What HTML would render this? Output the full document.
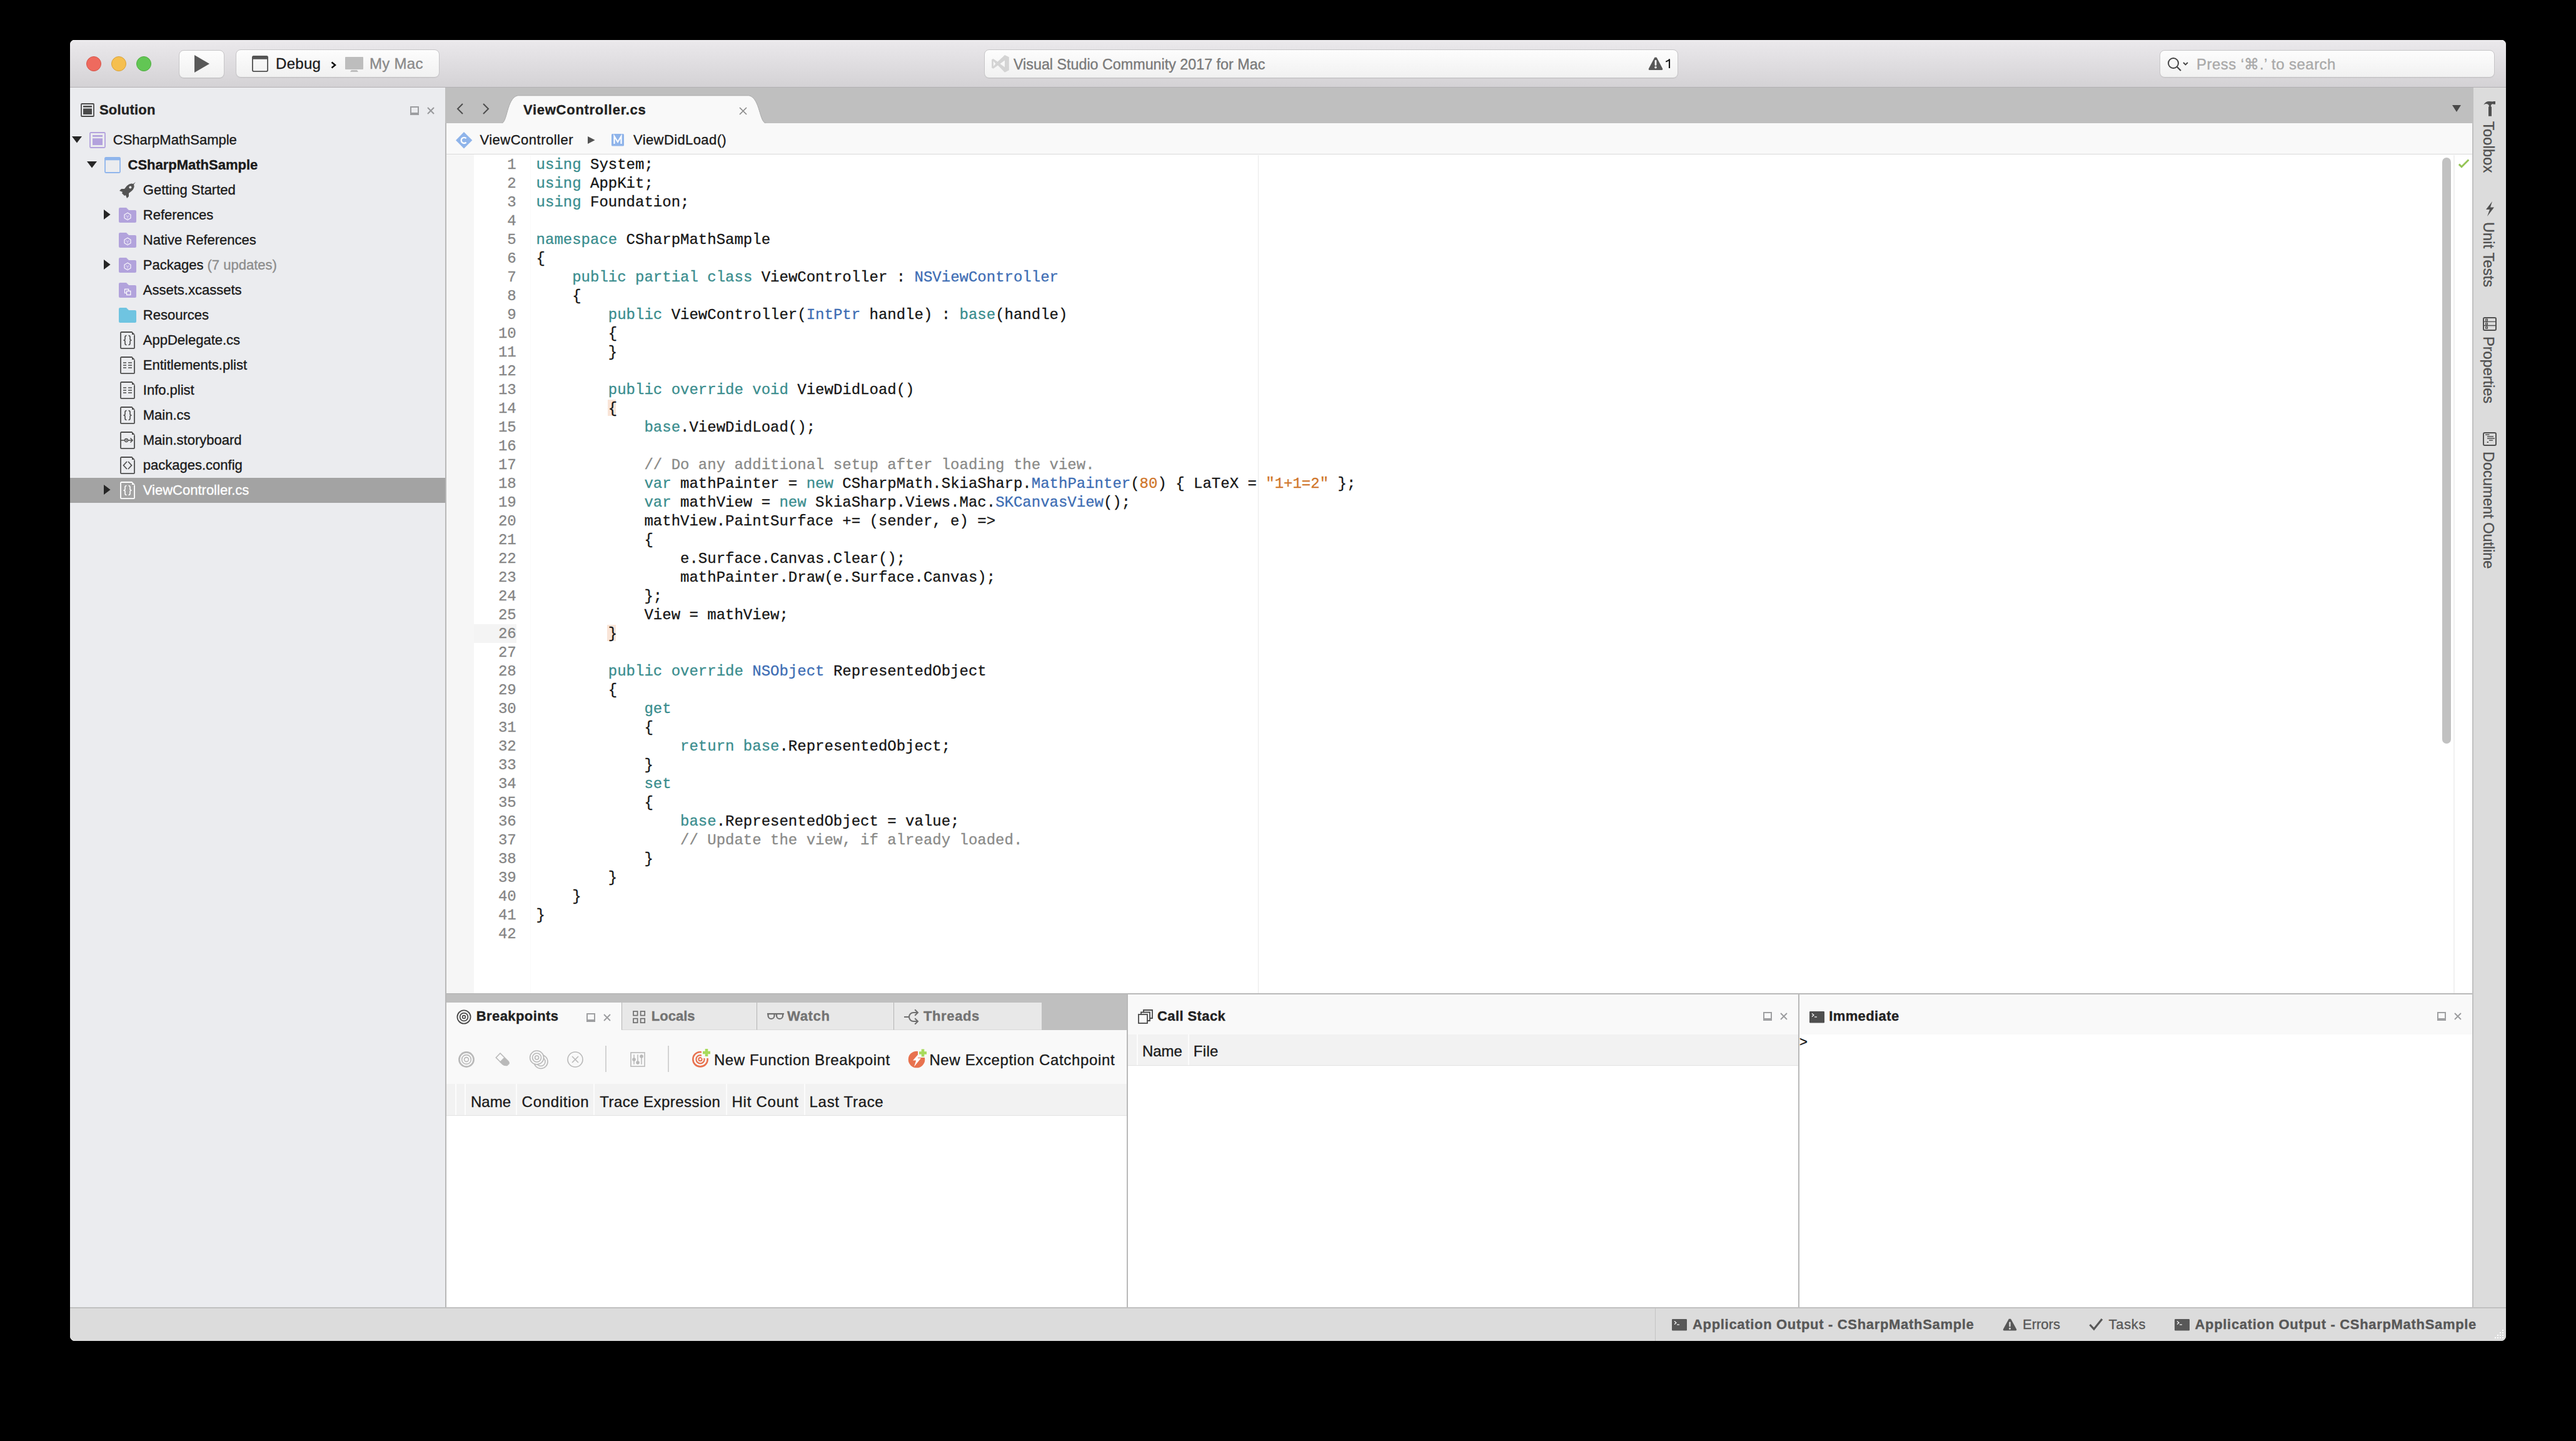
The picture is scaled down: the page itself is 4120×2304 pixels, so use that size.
<!DOCTYPE html>
<html><head><meta charset="utf-8">
<style>
*{margin:0;padding:0;box-sizing:border-box}
html,body{width:4120px;height:2304px;background:#000;overflow:hidden}
body{font-family:"Liberation Sans",sans-serif;position:relative;-webkit-text-stroke:0.35px}
.a{position:absolute}
#win{left:112px;top:64px;width:3896px;height:2080px;border-radius:7px 7px 8px 8px;overflow:hidden;background:#ececef}
#title{left:0;top:0;width:3896px;height:76px;background:linear-gradient(#ebe9ec,#d4d2d5);border-bottom:1px solid #b2b0b3;box-shadow:inset 0 1px 0 #f8f7f9}
.tl{width:24px;height:24px;border-radius:50%;top:26px}
.btn{background:linear-gradient(#fdfdfd,#f1f1f1);border:1px solid #c6c5c7;border-radius:8px;box-shadow:0 1px 0 rgba(0,0,0,0.05)}
#side{left:0;top:76px;width:602px;height:2015px;background:#ebecef;border-right:2px solid #b8b8b8}
#tabbar{left:600px;top:76px;width:3242px;height:57px;background:#bfbfbf}
#crumb{left:602px;top:133px;width:3240px;height:51px;background:#f9f9f9;border-bottom:2px solid #dadada}
#editor{left:602px;top:183px;width:3240px;height:1343px;background:#fff;border-bottom:2px solid #b9b9b9}
#gut{left:0;top:0;width:44px;height:1341px;background:#f6f6f6}
#code{z-index:3;left:0;top:2px;font-family:"Liberation Mono",monospace;font-size:24px;line-height:30px;white-space:pre;color:#161616;-webkit-text-stroke:0.3px}
.ln{position:absolute;left:0;width:111.7px;text-align:right;color:#858585}
.cl{position:absolute;left:143.6px}
.k{color:#3a8d8e}.t{color:#3d6db4}.n{color:#d0762a}.c{color:#8a8a88}
.tt{font-size:24px;line-height:30px;white-space:nowrap;letter-spacing:0.3px}
.st{font-size:22px;line-height:30px;white-space:nowrap}
#rside{left:3842px;top:76px;width:54px;height:1951px;background:#dcdcdc;border-left:2px solid #c0c0c0}
#status{left:0;top:2025.7px;width:3896px;height:54.3px;background:#dcdcdc;border-top:2.3px solid #c0c0c0}
</style></head><body>
<div id="win" class="a">
  <div id="title" class="a">
    <div class="a tl" style="left:26px;background:#ee6a5e;border:1px solid #d5554a"></div>
    <div class="a tl" style="left:66px;background:#f5bf4f;border:1px solid #d9a23b"></div>
    <div class="a tl" style="left:106px;background:#62c654;border:1px solid #4ead40"></div>
    <div class="a btn" style="left:173.5px;top:15.5px;width:73px;height:45px"></div>
    <svg class="a" style="left:199px;top:24px" width="25" height="28"><path d="M0 0 L24 14 L0 28 Z" fill="#585858"/></svg>
    <div class="a btn" style="left:265px;top:15px;width:326px;height:45px"></div>
    <svg class="a" style="left:291px;top:25px" width="26" height="26"><rect x="0.9" y="0.9" width="24.2" height="24.2" rx="2" fill="none" stroke="#505050" stroke-width="1.8"/><rect x="0.5" y="0.5" width="25" height="5.2" rx="1.5" fill="#555"/></svg>
    <div class="a tt" style="left:329px;top:23.3px;color:#1d1d1d">Debug</div>
    <svg class="a" style="left:417px;top:34px" width="9" height="12"><path d="M1.5 1.5 L7 6 L1.5 10.5" fill="none" stroke="#111" stroke-width="2.6"/></svg>
    <svg class="a" style="left:440px;top:27px" width="29" height="25"><rect x="0" y="0" width="29" height="20" rx="1" fill="#bdbdbd"/><path d="M10 21 L19 21 L21 24 L8 24 Z" fill="#bdbdbd"/></svg>
    <div class="a tt" style="left:479px;top:23.3px;color:#8a8a8a">My Mac</div>
    <div class="a btn" style="left:1462px;top:15px;width:1110px;height:45.5px"></div>
    <svg class="a" style="left:1468px;top:18px" width="40" height="40"><path d="M6.1 13.3 L8.7 12 L15.5 16.8 L27 6 L33.8 9.2 L33.8 30.3 L27 33.7 L16 22.6 L8.7 27.8 L6.1 26.5 Z M8.9 15.7 L12.5 20 L8.9 24 Z M27 14.5 L19.5 20 L27 25.5 Z" fill="#d4d4d4" fill-rule="evenodd"/></svg>
    <div class="a tt" style="left:1509px;top:23.7px;color:#7a7a7a;font-size:23.3px;letter-spacing:0">Visual Studio Community 2017 for Mac</div>
    <svg class="a" style="left:2524px;top:27px" width="24" height="22"><path d="M12 1 Q13 0 14 1.5 L23 18.5 Q24 21 21.5 21 L2.5 21 Q0 21 1 18.5 L10 1.5 Q11 0 12 1 Z" fill="#575757"/><rect x="10.6" y="5" width="2.8" height="9" rx="1.2" fill="#fafafa"/><circle cx="12" cy="16.8" r="1.8" fill="#fafafa"/></svg>
    <svg class="a" style="left:2550.7px;top:29.5px" width="10" height="16"><path d="M7 0.5 L7 15" stroke="#151515" stroke-width="2.1"/><path d="M7.5 0.8 Q5 3.5 1.2 4.6" fill="none" stroke="#151515" stroke-width="1.9"/></svg>
    <div class="a btn" style="left:3342px;top:16px;width:536px;height:44px"></div>
    <svg class="a" style="left:3354px;top:27px" width="36" height="25"><circle cx="10" cy="10" r="8" fill="none" stroke="#444" stroke-width="2"/><path d="M15.5 15.5 L22 22" stroke="#444" stroke-width="2.2"/><path d="M26 9 L29.5 12.5 L33 9" fill="none" stroke="#444" stroke-width="1.8"/></svg>
    <div class="a tt" style="left:3401px;top:23.7px;color:#a9a9a9;font-size:24px;letter-spacing:0.45px">Press ‘⌘.’ to search</div>
  </div>
  <div id="side" class="a"></div>
<!--SIDE-->
<svg width="0" height="0" style="position:absolute"><defs>
<g id="i-sol"><rect x="1" y="1" width="24" height="24" rx="1.5" fill="none" stroke="#b3a2dd" stroke-width="1.8"/><rect x="5" y="5" width="16" height="2.8" fill="#b3a2dd"/><rect x="5" y="10.2" width="16" height="10.8" fill="#b3a2dd"/></g>
<g id="i-proj"><rect x="1" y="1" width="24" height="24" rx="1.5" fill="none" stroke="#8fb5ec" stroke-width="1.8"/><rect x="0.5" y="0.5" width="25" height="4.8" rx="1.5" fill="#8fb5ec"/></g>
<g id="i-rocket"><path d="M26 0 L22 3 Q17 1 12 6 L8 11 L3 11 L0 14 L5 16 L4 18 L8 22 L10 21 L12 26 L15 23 L15 18 L20 14 Q25 9 23 4 Z" fill="#545454"/><circle cx="17.4" cy="8.5" r="2" fill="#ececef"/></g>
<g id="i-pfold"><path d="M0 2 Q0 0 2 0 L12 0 L16 4 L26 4 Q28 4 28 6 L28 22 Q28 24 26 24 L2 24 Q0 24 0 22 Z" fill="#b2a3dc"/><path d="M14 8.3 L19 11.2 L19 16.8 L14 19.7 L9 16.8 L9 11.2 Z" fill="none" stroke="#fff" stroke-width="1.1"/><path d="M11.5 12.5 L14 14.5 L16.5 12.5 M14 14.5 L14 18" fill="none" stroke="#d6cdef" stroke-width="1.3"/></g>
<g id="i-xfold"><path d="M0 2 Q0 0 2 0 L12 0 L16 4 L26 4 Q28 4 28 6 L28 22 Q28 24 26 24 L2 24 Q0 24 0 22 Z" fill="#b2a3dc"/><rect x="9.5" y="10.3" width="6.2" height="6.2" fill="none" stroke="#fff" stroke-width="1.2"/><rect x="12.6" y="13.3" width="6.2" height="6.2" fill="#b2a3dc" stroke="#fff" stroke-width="1.2"/></g>
<g id="i-bfold"><path d="M0 2 Q0 0 2 0 L12 0 L16 4 L26 4 Q28 4 28 6 L28 22 Q28 24 26 24 L2 24 Q0 24 0 22 Z" fill="#6fc4e1"/></g>
<g id="i-file"><path d="M19 1 L2.5 1 Q1 1 1 2.5 L1 26 Q1 27.2 2.5 27.2 L21.8 27.2 Q23 27.2 23 26 L23 5.5" fill="none" stroke="currentColor" stroke-width="1.8"/><path d="M19 0.1 L23.9 5 L19 5 Z" fill="currentColor"/></g>
<g id="i-fcs"><use href="#i-file"/><path d="M10.5 6.5 Q8 6.5 8 9 L8 12 Q8 14 5.5 14 Q8 14 8 16 L8 19 Q8 21.5 10.5 21.5 M13.5 6.5 Q16 6.5 16 9 L16 12 Q16 14 18.5 14 Q16 14 16 16 L16 19 Q16 21.5 13.5 21.5" fill="none" stroke="currentColor" stroke-width="1.6"/></g>
<g id="i-fpl"><use href="#i-file"/><path d="M5 10 L10 10 M13 10 L19 10 M5 14 L10 14 M13 14 L19 14 M5 18 L10 18 M13 18 L19 18" stroke="currentColor" stroke-width="1.7"/></g>
<g id="i-fsb"><use href="#i-file"/><path d="M1 14 L7.5 14 M12.5 14 L20 14 M16.5 10.5 L20 14 L16.5 17.5" fill="none" stroke="currentColor" stroke-width="1.5"/><circle cx="10" cy="14" r="2.5" fill="none" stroke="currentColor" stroke-width="1.3"/><circle cx="10" cy="14" r="0.9" fill="currentColor"/></g>
<g id="i-fcfg"><use href="#i-file"/><path d="M11 8 L5.5 14 L11 20 M13 8 L18.5 14 L13 20" fill="none" stroke="currentColor" stroke-width="1.7"/></g>
</defs></svg>
<svg class="a" style="left:17px;top:101px" width="22" height="22"><rect x="1" y="1" width="20" height="20" rx="1" fill="none" stroke="#4a4a4a" stroke-width="1.8"/><rect x="4" y="4" width="14" height="2.6" fill="#4a4a4a"/><rect x="4" y="8.5" width="14" height="9.5" fill="#4a4a4a"/></svg>
<div class="a st" style="left:47px;top:96.9px;font-weight:700;color:#222;letter-spacing:0.2px">Solution</div>
<svg class="a" style="left:544px;top:106px" width="14" height="14"><rect x="1" y="1" width="12" height="12" fill="none" stroke="#9c9da0" stroke-width="2"/><rect x="0" y="10" width="14" height="4" fill="#9c9da0"/></svg>
<svg class="a" style="left:571px;top:107px" width="12" height="12"><path d="M1 1 L11 11 M11 1 L1 11" stroke="#97989b" stroke-width="2"/></svg>
<div class="a" style="left:0px;top:700px;width:600px;height:40px;background:#a3a3a3"></div>
<svg class="a" style="left:3px;top:154px" width="16" height="11"><path d="M0 0 L16 0 L8 10.5 Z" fill="#262626"/></svg>
<svg class="a" style="left:31px;top:147px;color:#4e4e4e" width="26" height="26"><use href="#i-sol"/></svg>
<div class="a st" style="left:68.75px;top:144.9px;color:#1b1b1b;font-weight:400">CSharpMathSample</div>
<svg class="a" style="left:27px;top:194px" width="16" height="11"><path d="M0 0 L16 0 L8 10.5 Z" fill="#262626"/></svg>
<svg class="a" style="left:55px;top:187px;color:#4e4e4e" width="26" height="26"><use href="#i-proj"/></svg>
<div class="a st" style="left:92.5px;top:184.9px;color:#1b1b1b;font-weight:700">CSharpMathSample</div>
<svg class="a" style="left:79px;top:227px;color:#4e4e4e" width="27" height="27"><use href="#i-rocket"/></svg>
<div class="a st" style="left:116.80000000000001px;top:224.89999999999998px;color:#1b1b1b;font-weight:400">Getting Started</div>
<svg class="a" style="left:54px;top:271px" width="11" height="16"><path d="M0 0 L10.6 8 L0 16 Z" fill="#262626"/></svg>
<svg class="a" style="left:78px;top:268px;color:#4e4e4e" width="28" height="24"><use href="#i-pfold"/></svg>
<div class="a st" style="left:116.80000000000001px;top:264.9px;color:#1b1b1b;font-weight:400">References</div>
<svg class="a" style="left:78px;top:308px;color:#4e4e4e" width="28" height="24"><use href="#i-pfold"/></svg>
<div class="a st" style="left:116.80000000000001px;top:304.9px;color:#1b1b1b;font-weight:400">Native References</div>
<svg class="a" style="left:54px;top:351px" width="11" height="16"><path d="M0 0 L10.6 8 L0 16 Z" fill="#262626"/></svg>
<svg class="a" style="left:78px;top:348px;color:#4e4e4e" width="28" height="24"><use href="#i-pfold"/></svg>
<div class="a st" style="left:116.80000000000001px;top:344.9px;color:#1b1b1b;font-weight:400">Packages <span style="color:#8d8d8d">(7 updates)</span></div>
<svg class="a" style="left:78px;top:388px;color:#4e4e4e" width="28" height="24"><use href="#i-xfold"/></svg>
<div class="a st" style="left:116.80000000000001px;top:384.9px;color:#1b1b1b;font-weight:400">Assets.xcassets</div>
<svg class="a" style="left:78px;top:428px;color:#4e4e4e" width="28" height="24"><use href="#i-bfold"/></svg>
<div class="a st" style="left:116.80000000000001px;top:424.9px;color:#1b1b1b;font-weight:400">Resources</div>
<svg class="a" style="left:80px;top:466px;color:#4e4e4e" width="25" height="29"><use href="#i-fcs"/></svg>
<div class="a st" style="left:116.80000000000001px;top:464.9px;color:#1b1b1b;font-weight:400">AppDelegate.cs</div>
<svg class="a" style="left:80px;top:506px;color:#4e4e4e" width="25" height="29"><use href="#i-fpl"/></svg>
<div class="a st" style="left:116.80000000000001px;top:504.9px;color:#1b1b1b;font-weight:400">Entitlements.plist</div>
<svg class="a" style="left:80px;top:546px;color:#4e4e4e" width="25" height="29"><use href="#i-fpl"/></svg>
<div class="a st" style="left:116.80000000000001px;top:544.9px;color:#1b1b1b;font-weight:400">Info.plist</div>
<svg class="a" style="left:80px;top:586px;color:#4e4e4e" width="25" height="29"><use href="#i-fcs"/></svg>
<div class="a st" style="left:116.80000000000001px;top:584.9px;color:#1b1b1b;font-weight:400">Main.cs</div>
<svg class="a" style="left:80px;top:626px;color:#4e4e4e" width="25" height="29"><use href="#i-fsb"/></svg>
<div class="a st" style="left:116.80000000000001px;top:624.9px;color:#1b1b1b;font-weight:400">Main.storyboard</div>
<svg class="a" style="left:80px;top:666px;color:#4e4e4e" width="25" height="29"><use href="#i-fcfg"/></svg>
<div class="a st" style="left:116.80000000000001px;top:664.9px;color:#1b1b1b;font-weight:400">packages.config</div>
<svg class="a" style="left:54px;top:711px" width="11" height="16"><path d="M0 0 L10.6 8 L0 16 Z" fill="#262626"/></svg>
<svg class="a" style="left:80px;top:706px;color:#fff" width="25" height="29"><use href="#i-fcs"/></svg>
<div class="a st" style="left:116.80000000000001px;top:704.9px;color:#fff;font-weight:400">ViewController.cs</div>
<!--/SIDE-->
  <div id="tabbar" class="a"></div>
  <div id="crumb" class="a"></div>
<!--TABS-->
<svg class="a" style="left:618px;top:101px" width="12" height="18"><path d="M10 1 L2 9 L10 17" fill="none" stroke="#4c4c4c" stroke-width="2"/></svg>
<svg class="a" style="left:660px;top:101px" width="12" height="18"><path d="M1 1 L9 9 L1 17" fill="none" stroke="#4c4c4c" stroke-width="2"/></svg>
<svg class="a" style="left:678px;top:88px" width="450" height="46"><path d="M11.5 45.5 C 22 45, 20 5, 38 0.8 L 408 0.8 C 426 5, 424 45, 436 45.5 Z" fill="#f9f9f9" stroke="#a9a9a9" stroke-width="1"/><rect x="0" y="45" width="450" height="2" fill="#f9f9f9"/></svg>
<div class="a st" style="left:725px;top:96.7px;font-weight:700;color:#222;letter-spacing:0.72px">ViewController.cs</div>
<svg class="a" style="left:1069.5px;top:107px" width="13" height="13"><path d="M1 1 L12 12 M12 1 L1 12" stroke="#8a8a8a" stroke-width="1.7"/></svg>
<svg class="a" style="left:3810px;top:104px" width="14" height="11"><path d="M0 0 L14 0 L7 11 Z" fill="#4a4a4a"/></svg>
<svg class="a" style="left:617px;top:146.7px" width="27" height="27"><path d="M13 0 L26.3 13.3 L13 26.6 L0 13.3 Z" fill="#8fb4ea"/><path d="M16.6 10.2 A4.6 4.6 0 1 0 16.6 16.6" fill="none" stroke="#fff" stroke-width="2.3"/></svg>
<div class="a st" style="left:655.4px;top:144.9px;color:#1b1b1b;letter-spacing:0.5px">ViewController</div>
<svg class="a" style="left:828px;top:154px" width="12" height="12"><path d="M0 0 L11.6 6 L0 12 Z" fill="#525252"/></svg>
<svg class="a" style="left:866px;top:150.2px" width="20" height="20"><rect x="0" y="0" width="20" height="19.6" rx="1.5" fill="#8fb4ea"/><path d="M4.5 16 L4.5 4 L10 13 L15.5 4 L15.5 16" fill="none" stroke="#fff" stroke-width="2.2" stroke-linejoin="miter"/></svg>
<div class="a st" style="left:901px;top:144.9px;color:#1b1b1b;letter-spacing:0.4px">ViewDidLoad()</div>
<!--/TABS-->
  <div id="editor" class="a">
    <div id="gut" class="a"></div>
    <div id="code" class="a">
<div class="ln" style="top:0px">1</div><div class="cl" style="top:0px"><span class="k">using</span> System;</div>
<div class="ln" style="top:30px">2</div><div class="cl" style="top:30px"><span class="k">using</span> AppKit;</div>
<div class="ln" style="top:60px">3</div><div class="cl" style="top:60px"><span class="k">using</span> Foundation;</div>
<div class="ln" style="top:90px">4</div><div class="cl" style="top:90px"></div>
<div class="ln" style="top:120px">5</div><div class="cl" style="top:120px"><span class="k">namespace</span> CSharpMathSample</div>
<div class="ln" style="top:150px">6</div><div class="cl" style="top:150px">{</div>
<div class="ln" style="top:180px">7</div><div class="cl" style="top:180px">    <span class="k">public</span> <span class="k">partial</span> <span class="k">class</span> ViewController : <span class="t">NSViewController</span></div>
<div class="ln" style="top:210px">8</div><div class="cl" style="top:210px">    {</div>
<div class="ln" style="top:240px">9</div><div class="cl" style="top:240px">        <span class="k">public</span> ViewController(<span class="t">IntPtr</span> handle) : <span class="k">base</span>(handle)</div>
<div class="ln" style="top:270px">10</div><div class="cl" style="top:270px">        {</div>
<div class="ln" style="top:300px">11</div><div class="cl" style="top:300px">        }</div>
<div class="ln" style="top:330px">12</div><div class="cl" style="top:330px"></div>
<div class="ln" style="top:360px">13</div><div class="cl" style="top:360px">        <span class="k">public</span> <span class="k">override</span> <span class="k">void</span> ViewDidLoad()</div>
<div class="ln" style="top:390px">14</div><div class="cl" style="top:390px">        {</div>
<div class="ln" style="top:420px">15</div><div class="cl" style="top:420px">            <span class="k">base</span>.ViewDidLoad();</div>
<div class="ln" style="top:450px">16</div><div class="cl" style="top:450px"></div>
<div class="ln" style="top:480px">17</div><div class="cl" style="top:480px">            <span class="c">// Do any additional setup after loading the view.</span></div>
<div class="ln" style="top:510px">18</div><div class="cl" style="top:510px">            <span class="k">var</span> mathPainter = <span class="k">new</span> CSharpMath.SkiaSharp.<span class="t">MathPainter</span>(<span class="n">80</span>) { LaTeX = <span class="n">&quot;1+1=2&quot;</span> };</div>
<div class="ln" style="top:540px">19</div><div class="cl" style="top:540px">            <span class="k">var</span> mathView = <span class="k">new</span> SkiaSharp.Views.Mac.<span class="t">SKCanvasView</span>();</div>
<div class="ln" style="top:570px">20</div><div class="cl" style="top:570px">            mathView.PaintSurface += (sender, e) =&gt;</div>
<div class="ln" style="top:600px">21</div><div class="cl" style="top:600px">            {</div>
<div class="ln" style="top:630px">22</div><div class="cl" style="top:630px">                e.Surface.Canvas.Clear();</div>
<div class="ln" style="top:660px">23</div><div class="cl" style="top:660px">                mathPainter.Draw(e.Surface.Canvas);</div>
<div class="ln" style="top:690px">24</div><div class="cl" style="top:690px">            };</div>
<div class="ln" style="top:720px">25</div><div class="cl" style="top:720px">            View = mathView;</div>
<div class="ln" style="top:750px">26</div><div class="cl" style="top:750px">        }</div>
<div class="ln" style="top:780px">27</div><div class="cl" style="top:780px"></div>
<div class="ln" style="top:810px">28</div><div class="cl" style="top:810px">        <span class="k">public</span> <span class="k">override</span> <span class="t">NSObject</span> RepresentedObject</div>
<div class="ln" style="top:840px">29</div><div class="cl" style="top:840px">        {</div>
<div class="ln" style="top:870px">30</div><div class="cl" style="top:870px">            <span class="k">get</span></div>
<div class="ln" style="top:900px">31</div><div class="cl" style="top:900px">            {</div>
<div class="ln" style="top:930px">32</div><div class="cl" style="top:930px">                <span class="k">return</span> <span class="k">base</span>.RepresentedObject;</div>
<div class="ln" style="top:960px">33</div><div class="cl" style="top:960px">            }</div>
<div class="ln" style="top:990px">34</div><div class="cl" style="top:990px">            <span class="k">set</span></div>
<div class="ln" style="top:1020px">35</div><div class="cl" style="top:1020px">            {</div>
<div class="ln" style="top:1050px">36</div><div class="cl" style="top:1050px">                <span class="k">base</span>.RepresentedObject = value;</div>
<div class="ln" style="top:1080px">37</div><div class="cl" style="top:1080px">                <span class="c">// Update the view, if already loaded.</span></div>
<div class="ln" style="top:1110px">38</div><div class="cl" style="top:1110px">            }</div>
<div class="ln" style="top:1140px">39</div><div class="cl" style="top:1140px">        }</div>
<div class="ln" style="top:1170px">40</div><div class="cl" style="top:1170px">    }</div>
<div class="ln" style="top:1200px">41</div><div class="cl" style="top:1200px">}</div>
<div class="ln" style="top:1230px">42</div><div class="cl" style="top:1230px"></div>
</div>
  </div>
  <!--ED-->
<div class="a" style="left:736px;top:184px;width:1px;height:1340px;background:#fafafa;"></div>
<div class="a" style="left:1900px;top:184px;width:1px;height:1340px;background:#e9e9e9;"></div>
<div class="a" style="left:646px;top:933.7px;width:68px;height:30.1px;background:#f4f4f4;"></div>
<div class="a" style="left:859.4px;top:935px;width:13.9px;height:25.8px;background:#f9e5d8;"></div>
<div class="a" style="left:859.6px;top:575px;width:13.8px;height:25.7px;background:#f9e5d8;"></div>
<div class="a" style="left:3794px;top:188px;width:14px;height:936.5px;background:#c1c1c1;border-radius:7px"></div>
<div class="a" style="left:3812.2px;top:184px;width:1.6px;height:1340px;background:#f1f1f1;"></div>
<svg class="a" style="left:3818px;top:189px" width="22" height="17"><path d="M2.9 9.6 L7 13.7 L18.3 2.5" fill="none" stroke="#94c455" stroke-width="2.9"/></svg>
<!--/ED-->
<!--BOT-->
<div class="a" style="left:602px;top:1526px;width:3240px;height:501px;background:#fff;"></div>
<div class="a" style="left:602px;top:1526px;width:1088px;height:13px;background:#bfbfbf;"></div>
<div class="a" style="left:1554px;top:1539px;width:136px;height:44px;background:#bfbfbf;"></div>
<div class="a" style="left:602px;top:1539px;width:1088px;height:130px;background:#f9f9f9;"></div>
<div class="a" style="left:1554px;top:1539px;width:136px;height:44px;background:#bfbfbf;"></div>
<div class="a" style="left:881.5px;top:1539px;width:216.5px;height:44px;background:#e8e8e8;border-left:1.5px solid #b4b4b4;border-bottom:1px solid #d9d9d9"></div>
<div class="a" style="left:1098px;top:1539px;width:218.5px;height:44px;background:#e8e8e8;border-left:1.5px solid #b4b4b4;border-bottom:1px solid #d9d9d9"></div>
<div class="a" style="left:1316.5px;top:1539px;width:237.5px;height:44px;background:#e8e8e8;border-left:1.5px solid #b4b4b4;border-bottom:1px solid #d9d9d9"></div>
<svg class="a" style="left:618px;top:1550px;" width="24" height="24"><circle cx="12" cy="12" r="10.6" fill="none" stroke="#4a4a4a" stroke-width="1.8"/><circle cx="12" cy="12" r="6.4" fill="none" stroke="#4a4a4a" stroke-width="1.8"/><circle cx="12" cy="12" r="2.4" fill="none" stroke="#4a4a4a" stroke-width="1.6"/></svg>
<div class="a" style="left:649.8px;top:1546.08px;font-size:22px;line-height:30px;white-space:nowrap;color:#222;font-weight:700;letter-spacing:0.4px;">Breakpoints</div>
<svg class="a" style="left:826px;top:1556px;" width="14" height="14"><rect x="1" y="1" width="12" height="12" fill="none" stroke="#9fa0a2" stroke-width="2"/><rect x="0" y="10" width="14" height="4" fill="#9fa0a2"/></svg>
<svg class="a" style="left:853px;top:1557px;" width="12" height="12"><path d="M1 1 L11 11 M11 1 L1 11" stroke="#9a9b9d" stroke-width="1.8"/></svg>
<svg class="a" style="left:900px;top:1552px;" width="21" height="21"><rect x="1" y="1" width="6.6" height="6.6" fill="none" stroke="#6e6e6e" stroke-width="1.7"/><rect x="1" y="12.6" width="6.6" height="6.6" fill="none" stroke="#6e6e6e" stroke-width="1.7"/><rect x="12.6" y="1" width="6.6" height="6.6" fill="none" stroke="#6e6e6e" stroke-width="1.7"/><rect x="12.6" y="12.6" width="6.6" height="6.6" fill="none" stroke="#6e6e6e" stroke-width="1.7"/></svg>
<div class="a" style="left:929.8px;top:1546.18px;font-size:22px;line-height:30px;white-space:nowrap;color:#737373;font-weight:700;letter-spacing:0px;">Locals</div>
<svg class="a" style="left:1114px;top:1555px;" width="29" height="14"><path d="M1 2 L28 2" stroke="#6e6e6e" stroke-width="2.2"/><path d="M2.5 2 L2.5 5 A5 5 0 0 0 12.5 5 L12.5 2 M16 2 L16 5 A5 5 0 0 0 26 5 L26 2" fill="none" stroke="#6e6e6e" stroke-width="2.2"/></svg>
<div class="a" style="left:1147px;top:1546.18px;font-size:22px;line-height:30px;white-space:nowrap;color:#737373;font-weight:700;letter-spacing:0.7px;">Watch</div>
<svg class="a" style="left:1333px;top:1548px;" width="26" height="26"><path d="M1 14 L8.5 14" stroke="#6e6e6e" stroke-width="2"/><path d="M23 7 L16 7 A7 7 0 0 0 16 21 L23 21" fill="none" stroke="#6e6e6e" stroke-width="2"/><path d="M18.2 2.2 L23 7 L18.2 11.8 M18.2 16.2 L23 21 L18.2 25.8" fill="none" stroke="#6e6e6e" stroke-width="2"/></svg>
<div class="a" style="left:1365px;top:1546.18px;font-size:22px;line-height:30px;white-space:nowrap;color:#737373;font-weight:700;letter-spacing:0.62px;">Threads</div>
<svg class="a" style="left:620px;top:1616px;" width="28" height="28"><circle cx="14" cy="14" r="11.6" fill="none" stroke="#b9b9b9" stroke-width="2.6"/><circle cx="14" cy="14" r="7.4" fill="none" stroke="#b9b9b9" stroke-width="1.6"/><circle cx="14" cy="14" r="3.4" fill="none" stroke="#b9b9b9" stroke-width="1.6"/></svg>
<svg class="a" style="left:680px;top:1619px;" width="24" height="22"><path d="M8 1 L1.3 8 L12 18.7 Q14 20.5 17 20.5 L19 20.5 L22 17.5 Q22.5 15.5 21 14 Z" fill="none" stroke="#b9b9b9" stroke-width="1.6"/><path d="M14.5 7.5 L7 15 L12 19.5 Q14 20.8 17.5 20.8 L21.5 17.5 Q22.7 15.5 21.5 14 Z" fill="#b9b9b9"/></svg>
<svg class="a" style="left:733px;top:1614px;" width="36" height="34"><circle cx="20" cy="19.5" r="11" fill="#f9f9f9" stroke="#b9b9b9" stroke-width="1.6"/><circle cx="20" cy="19.5" r="7" fill="none" stroke="#b9b9b9" stroke-width="1.6"/><circle cx="13.6" cy="13" r="11" fill="#f9f9f9" stroke="#b9b9b9" stroke-width="1.6"/><circle cx="13.6" cy="13" r="7" fill="none" stroke="#b9b9b9" stroke-width="1.6"/><circle cx="13.6" cy="13" r="3" fill="none" stroke="#b9b9b9" stroke-width="1.6"/></svg>
<svg class="a" style="left:794px;top:1616px;" width="28" height="28"><circle cx="14" cy="14" r="12" fill="none" stroke="#b9b9b9" stroke-width="1.6"/><path d="M9 9 L19 19 M19 9 L9 19" stroke="#b9b9b9" stroke-width="1.6"/></svg>
<div class="a" style="left:856.2px;top:1608px;width:1.8px;height:42px;background:#d3d3d3;"></div>
<svg class="a" style="left:896px;top:1618px;" width="24" height="24"><rect x="1" y="1" width="22" height="22" fill="none" stroke="#b9b9b9" stroke-width="1.6"/><path d="M6 4.2 L6 19.8 M12 4.2 L12 19.8 M18 4.2 L18 19.8" stroke="#b9b9b9" stroke-width="1.5"/><circle cx="6" cy="12" r="2.8" fill="#b9b9b9"/><circle cx="12" cy="17" r="2.8" fill="#b9b9b9"/><circle cx="18" cy="7" r="2.8" fill="#b9b9b9"/></svg>
<div class="a" style="left:956px;top:1608px;width:2px;height:42px;background:#d3d3d3;"></div>
<svg class="a" style="left:994px;top:1613px;" width="31" height="31"><circle cx="14" cy="16.7" r="11.7" fill="none" stroke="#e8724f" stroke-width="2.6"/><circle cx="14" cy="16.7" r="6.6" fill="none" stroke="#e8724f" stroke-width="2.2"/><circle cx="14" cy="16.7" r="2.6" fill="none" stroke="#e8724f" stroke-width="2"/><rect x="16" y="-1" width="16" height="16" fill="#f9f9f9"/><path d="M18 6 L30 6 M24 0 L24 12" stroke="#a8da5c" stroke-width="4.6"/></svg>
<div class="a" style="left:1029.9px;top:1616.48px;font-size:24px;line-height:30px;white-space:nowrap;color:#1b1b1b;font-weight:400;letter-spacing:0.6px;">New Function Breakpoint</div>
<svg class="a" style="left:1340px;top:1613px;" width="32" height="32"><circle cx="14" cy="17" r="13.3" fill="#e8724f"/><path d="M19.5 5.5 L8 18.5 L13.2 18.5 L10 28.5 L21 15 L15.8 15 Z" fill="#fff"/><rect x="16" y="-1" width="17" height="15" fill="#f9f9f9"/><path d="M18 6.5 L30 6.5 M24 0.5 L24 12.5" stroke="#a8da5c" stroke-width="4.6"/></svg>
<div class="a" style="left:1374.4px;top:1616.38px;font-size:24px;line-height:30px;white-space:nowrap;color:#1b1b1b;font-weight:400;letter-spacing:0.64px;">New Exception Catchpoint</div>
<div class="a" style="left:602px;top:1669px;width:1088px;height:51px;background:#f2f2f2;border-bottom:1.5px solid #e2e2e2"></div>
<div class="a" style="left:616px;top:1669px;width:2px;height:50px;background:#fcfcfc;"></div>
<div class="a" style="left:631px;top:1669px;width:2px;height:50px;background:#fcfcfc;"></div>
<div class="a" style="left:712.8px;top:1669px;width:2.0px;height:50px;background:#fcfcfc;"></div>
<div class="a" style="left:837.4px;top:1669px;width:2.0px;height:50px;background:#fcfcfc;"></div>
<div class="a" style="left:1049.4px;top:1669px;width:2.0px;height:50px;background:#fcfcfc;"></div>
<div class="a" style="left:1173.5px;top:1669px;width:2.0px;height:50px;background:#fcfcfc;"></div>
<div class="a" style="left:641px;top:1682.58px;font-size:24px;line-height:30px;white-space:nowrap;color:#1b1b1b;font-weight:400;letter-spacing:0px;">Name</div>
<div class="a" style="left:722.6px;top:1682.58px;font-size:24px;line-height:30px;white-space:nowrap;color:#1b1b1b;font-weight:400;letter-spacing:0.7px;">Condition</div>
<div class="a" style="left:847.3px;top:1682.58px;font-size:24px;line-height:30px;white-space:nowrap;color:#1b1b1b;font-weight:400;letter-spacing:0.45px;">Trace Expression</div>
<div class="a" style="left:1058.5px;top:1682.58px;font-size:24px;line-height:30px;white-space:nowrap;color:#1b1b1b;font-weight:400;letter-spacing:0.75px;">Hit Count</div>
<div class="a" style="left:1182.6px;top:1682.58px;font-size:24px;line-height:30px;white-space:nowrap;color:#1b1b1b;font-weight:400;letter-spacing:0.67px;">Last Trace</div>
<div class="a" style="left:1690px;top:1526px;width:2px;height:501px;background:#b9b9b9;"></div>
<div class="a" style="left:1692px;top:1526px;width:1072px;height:64px;background:#f9f9f9;"></div>
<svg class="a" style="left:1708px;top:1550px;" width="24" height="24"><rect x="1" y="8" width="14" height="14" fill="none" stroke="#4a4a4a" stroke-width="1.8"/><path d="M5 8 L5 4.5 L19 4.5 L19 18 L15 18" fill="none" stroke="#4a4a4a" stroke-width="1.8"/><path d="M9 4.5 L9 1 L23 1 L23 14 L19 14" fill="none" stroke="#4a4a4a" stroke-width="1.8"/></svg>
<div class="a" style="left:1739px;top:1546.18px;font-size:22px;line-height:30px;white-space:nowrap;color:#222;font-weight:700;letter-spacing:0.4px;">Call Stack</div>
<svg class="a" style="left:2708px;top:1554.4px;" width="14" height="14"><rect x="1" y="1" width="12" height="12" fill="none" stroke="#9fa0a2" stroke-width="2"/><rect x="0" y="10" width="14" height="4" fill="#9fa0a2"/></svg>
<svg class="a" style="left:2735px;top:1555.4px;" width="12" height="12"><path d="M1 1 L11 11 M11 1 L1 11" stroke="#9a9b9d" stroke-width="1.8"/></svg>
<div class="a" style="left:1692px;top:1590px;width:1072px;height:50px;background:#f2f2f2;border-bottom:1.5px solid #e2e2e2"></div>
<div class="a" style="left:1705.7px;top:1590px;width:2.0px;height:49px;background:#fcfcfc;"></div>
<div class="a" style="left:1787.6px;top:1590px;width:2.0px;height:49px;background:#fcfcfc;"></div>
<div class="a" style="left:1714.9px;top:1602.38px;font-size:24px;line-height:30px;white-space:nowrap;color:#1b1b1b;font-weight:400;letter-spacing:0px;">Name</div>
<div class="a" style="left:1796.8px;top:1602.38px;font-size:24px;line-height:30px;white-space:nowrap;color:#1b1b1b;font-weight:400;letter-spacing:0.3px;">File</div>
<div class="a" style="left:2764px;top:1526px;width:2px;height:501px;background:#b9b9b9;"></div>
<div class="a" style="left:2766px;top:1526px;width:1076px;height:64px;background:#f9f9f9;"></div>
<svg class="a" style="left:2782px;top:1553px;" width="24" height="19"><rect x="0" y="0" width="24" height="18.5" rx="1.2" fill="#4f4f4f"/><path d="M4 3.5 L7 6 L4 8.5" fill="none" stroke="#fff" stroke-width="1.2"/><path d="M8 9 L12 9" stroke="#fff" stroke-width="1.2"/></svg>
<div class="a" style="left:2813.2px;top:1546.18px;font-size:22px;line-height:30px;white-space:nowrap;color:#222;font-weight:700;letter-spacing:0.4px;">Immediate</div>
<svg class="a" style="left:3786px;top:1554px;" width="14" height="14"><rect x="1" y="1" width="12" height="12" fill="none" stroke="#9fa0a2" stroke-width="2"/><rect x="0" y="10" width="14" height="4" fill="#9fa0a2"/></svg>
<svg class="a" style="left:3813px;top:1555px;" width="12" height="12"><path d="M1 1 L11 11 M11 1 L1 11" stroke="#9a9b9d" stroke-width="1.8"/></svg>
<div class="a" style="left:2766px;top:1587.38px;font-size:22px;line-height:30px;white-space:nowrap;color:#111;font-weight:400;letter-spacing:0px;">&gt;</div>
<!--/BOT-->
<div id="rside" class="a"></div>
  <div id="status" class="a"></div>
<!--RS-->
<svg class="a" style="left:3854px;top:91px;" width="32" height="36"><path d="M6.25 12.75 Q9 7 15 7 L21.25 7.5 L21.25 7 L25 7 L25 11.75 L21.25 11.75 L21.25 11 Q18 11.5 17.8 15 L19 16 L19 30.75 L14 30.75 L14 16 L15 15 Q14.5 11 10 11 Q8 11 6.25 12.75 Z" fill="#505050"/></svg>
<div class="a" style="left:3883.14px;top:130.4px;font-size:23.5px;line-height:30px;white-space:nowrap;color:#505050;letter-spacing:0.2px;transform:rotate(90deg);transform-origin:0 0">Toolbox</div>
<svg class="a" style="left:3862px;top:258px;" width="16" height="24"><path d="M12 0 L2 13 L8 13 L4 24 L15 9.5 L9 9.5 Z" fill="#505050" transform="translate(0,0)"/></svg>
<div class="a" style="left:3883.14px;top:291px;font-size:23.5px;line-height:30px;white-space:nowrap;color:#505050;letter-spacing:0.15px;transform:rotate(90deg);transform-origin:0 0">Unit Tests</div>
<svg class="a" style="left:3858px;top:442px;" width="24" height="24"><rect x="2" y="2" width="20" height="20" rx="2" fill="none" stroke="#505050" stroke-width="2"/><path d="M2 8.4 L22 8.4 M2 14.5 L22 14.5" stroke="#505050" stroke-width="1.3"/><rect x="5.6" y="4.3" width="2.8" height="2.8" fill="none" stroke="#505050" stroke-width="1.3"/><rect x="5.6" y="10.4" width="2.8" height="2.8" fill="none" stroke="#505050" stroke-width="1.3"/><rect x="5.6" y="16.4" width="2.8" height="2.8" fill="none" stroke="#505050" stroke-width="1.3"/></svg>
<div class="a" style="left:3883.14px;top:474px;font-size:23.5px;line-height:30px;white-space:nowrap;color:#505050;letter-spacing:0.0px;transform:rotate(90deg);transform-origin:0 0">Properties</div>
<svg class="a" style="left:3858px;top:626px;" width="24" height="24"><rect x="2" y="2" width="20" height="20" rx="2" fill="none" stroke="#505050" stroke-width="2"/><path d="M5 5 L11.5 5 M8 8 L18 8 M8 11 L20 11 M11 14 L17 14" stroke="#505050" stroke-width="1.6"/><rect x="7.8" y="16" width="2" height="2" fill="#505050"/></svg>
<div class="a" style="left:3883.14px;top:658px;font-size:23.5px;line-height:30px;white-space:nowrap;color:#505050;letter-spacing:-0.05px;transform:rotate(90deg);transform-origin:0 0">Document Outline</div>
<div class="a" style="left:2535px;top:2028px;width:1px;height:52px;background:#c4c4c4;"></div>
<svg class="a" style="left:2562px;top:2045px;" width="24" height="19"><rect x="0" y="0" width="24" height="18.5" rx="1.2" fill="#585858"/><path d="M4 3.5 L7 6 L4 8.5" fill="none" stroke="#fff" stroke-width="1.2"/><path d="M8 9 L12 9" stroke="#fff" stroke-width="1.2"/></svg>
<div class="a" style="left:2595px;top:2039.28px;font-size:22px;line-height:30px;white-space:nowrap;color:#585858;font-weight:700;letter-spacing:0.68px;">Application Output - CSharpMathSample</div>
<svg class="a" style="left:3091px;top:2044px;" width="23" height="20"><path d="M11.5 1 Q12.5 0 13.5 1.5 L22 17 Q23 19.5 20.5 19.5 L2.5 19.5 Q0 19.5 1 17 L9.5 1.5 Q10.5 0 11.5 1 Z" fill="#585858"/><rect x="10.3" y="5.5" width="2.4" height="8" rx="1" fill="#dcdcdc"/><circle cx="11.5" cy="16.2" r="1.5" fill="#dcdcdc"/></svg>
<div class="a" style="left:3123px;top:2039.38px;font-size:22px;line-height:30px;white-space:nowrap;color:#585858;font-weight:400;letter-spacing:0px;">Errors</div>
<svg class="a" style="left:3229px;top:2043px;" width="23" height="21"><path d="M1.5 11 L8 18 L21 2" fill="none" stroke="#585858" stroke-width="3.2"/></svg>
<div class="a" style="left:3260.5px;top:2039.38px;font-size:22px;line-height:30px;white-space:nowrap;color:#585858;font-weight:400;letter-spacing:0.7px;">Tasks</div>
<svg class="a" style="left:3366px;top:2045px;" width="24" height="19"><rect x="0" y="0" width="24" height="18.5" rx="1.2" fill="#585858"/><path d="M4 3.5 L7 6 L4 8.5" fill="none" stroke="#fff" stroke-width="1.2"/><path d="M8 9 L12 9" stroke="#fff" stroke-width="1.2"/></svg>
<div class="a" style="left:3398.5px;top:2039.28px;font-size:22px;line-height:30px;white-space:nowrap;color:#585858;font-weight:700;letter-spacing:0.68px;">Application Output - CSharpMathSample</div>
<svg class="a" style="left:3876px;top:2060px;" width="18" height="18"><g fill="#fff"><rect x="14" y="2" width="2" height="2"/><rect x="10" y="6" width="2" height="2"/><rect x="14" y="6" width="2" height="2"/><rect x="6" y="10" width="2" height="2"/><rect x="10" y="10" width="2" height="2"/><rect x="14" y="10" width="2" height="2"/><rect x="2" y="14" width="2" height="2"/><rect x="6" y="14" width="2" height="2"/><rect x="10" y="14" width="2" height="2"/><rect x="14" y="14" width="2" height="2"/></g></svg>
<!--/RS-->
</div>
</body></html>
